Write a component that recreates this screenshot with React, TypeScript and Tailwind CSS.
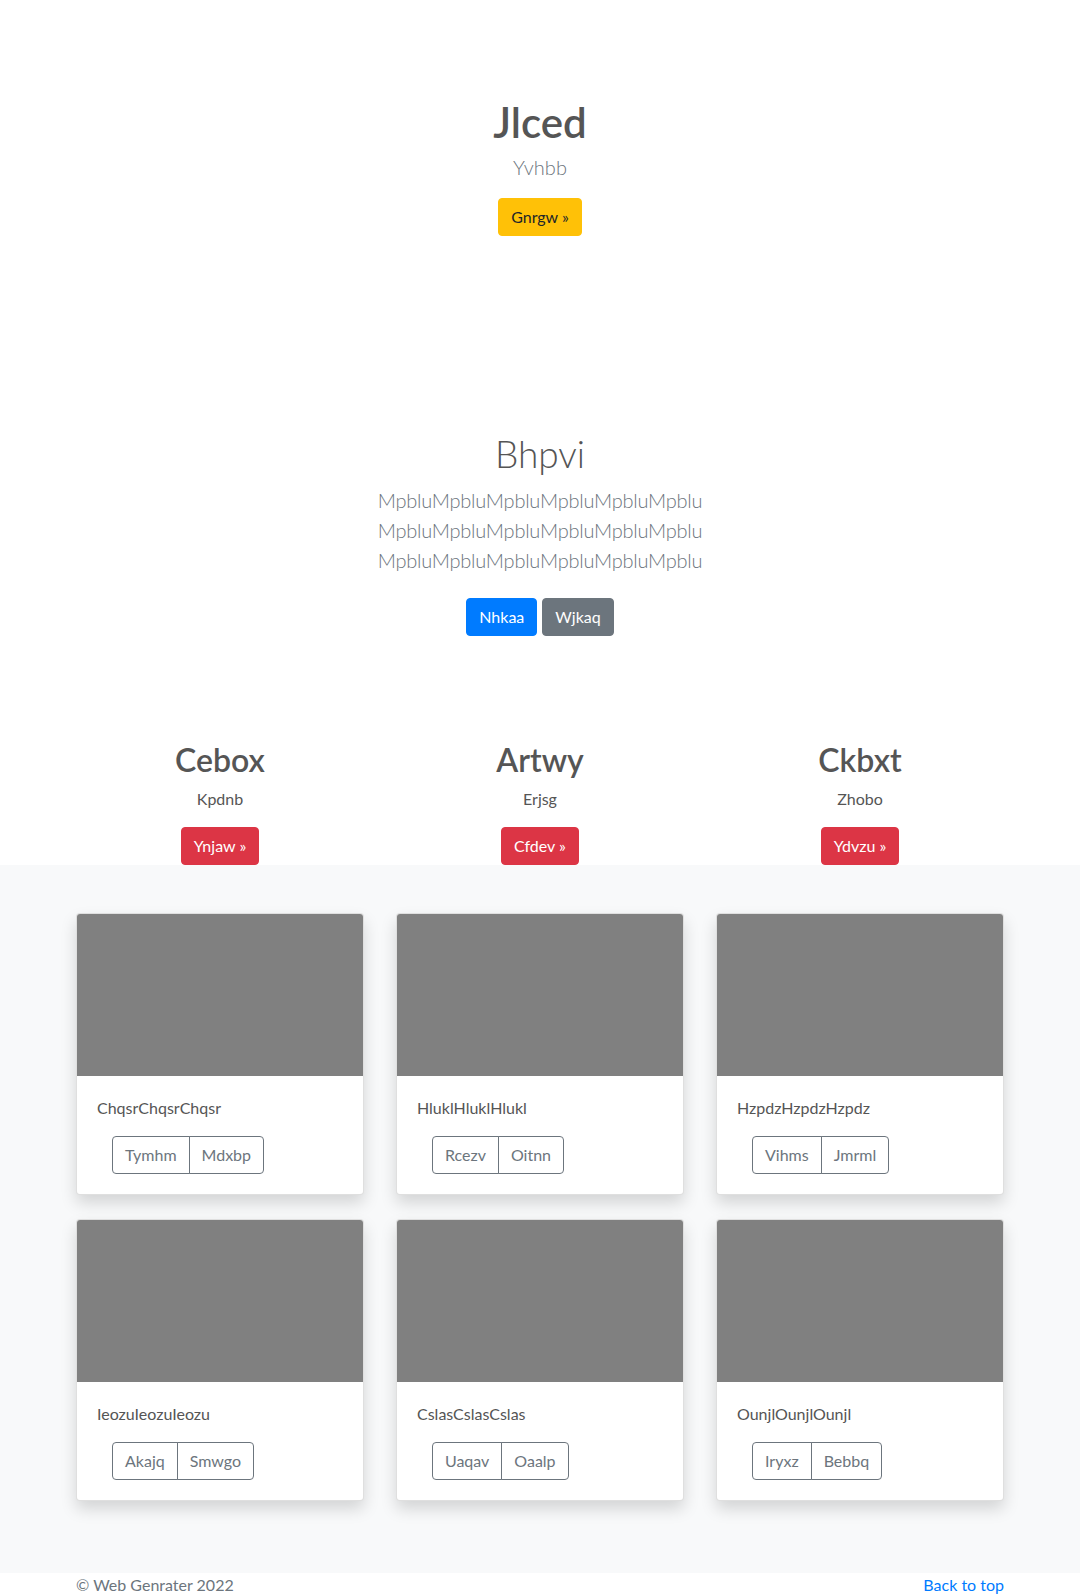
import { clsx } from 'clsx'

const features = [
  { title: 'Cebox', text: 'Kpdnb', action: 'Ynjaw' },
  { title: 'Artwy', text: 'Erjsg', action: 'Cfdev' },
  { title: 'Ckbxt', text: 'Zhobo', action: 'Ydvzu' },
]

const cards = [
  { text: 'ChqsrChqsrChqsr', actions: ['Tymhm', 'Mdxbp'] },
  { text: 'HluklHluklHlukl', actions: ['Rcezv', 'Oitnn'] },
  { text: 'HzpdzHzpdzHzpdz', actions: ['Vihms', 'Jmrml'] },
  { text: 'IeozuIeozuIeozu', actions: ['Akajq', 'Smwgo'] },
  { text: 'CslasCslasCslas', actions: ['Uaqav', 'Oaalp'] },
  { text: 'OunjlOunjlOunjl', actions: ['Iryxz', 'Bebbq'] },
]

const btn = 'inline-block px-3 py-[6px] text-base leading-6 border rounded-[4px]'

const Card = ({ text, actions }: { text: string; actions: string[] }) => (
  <div className="bg-white border border-[rgba(0,0,0,0.125)] rounded-[4px] overflow-hidden shadow-[0_8px_16px_rgba(0,0,0,0.15)]">
    <div className="h-[162px] bg-[#808080]" />
    <div className="p-5">
      <p className="text-base leading-6 text-[#555] mb-4">{text}</p>
      <div className="flex ml-[15px]">
        {actions.map((label, index) => (
          <button
            key={label}
            className={clsx(
              btn,
              'border-[#6c757d] text-[#6c757d] bg-transparent',
              index === 0 ? 'rounded-r-none' : 'rounded-l-none -ml-px'
            )}
          >
            {label}
          </button>
        ))}
      </div>
    </div>
  </div>
)

export default function App() {
  return (
    <div className="min-h-[1596px] bg-white text-[#555] font-['Lato','Segoe_UI',sans-serif]">
      {/* hero */}
      <section className="pt-[97px] text-center">
        <h1 className="text-[42px] leading-[1.2] font-semibold text-[#555]">Jlced</h1>
        <p className="mt-[5px] text-[20px] leading-[30px] font-light text-[#6c757d]">Yvhbb</p>
        <button className={clsx(btn, 'mt-4 bg-[#ffc107] border-[#ffc107] text-[#212529]')}>
          Gnrgw »
        </button>
      </section>

      {/* intro */}
      <section className="mt-[196px] text-center">
        <h1 className="text-[37px] leading-[1.2] font-light text-[#555]">Bhpvi</h1>
        <p className="mx-auto mt-2 max-w-[456px] text-[20px] leading-[30px] font-light tracking-[-0.25px] text-[#6c757d]">
          MpbluMpbluMpbluMpbluMpbluMpblu MpbluMpbluMpbluMpbluMpbluMpblu MpbluMpbluMpbluMpbluMpbluMpblu
        </p>
        <div className="mt-[23px] flex justify-center gap-[5px]">
          <button className={clsx(btn, 'bg-[#007bff] border-[#007bff] text-white')}>Nhkaa</button>
          <button className={clsx(btn, 'bg-[#6c757d] border-[#6c757d] text-white')}>Wjkaq</button>
        </div>
      </section>

      {/* features */}
      <section className="mt-[105px] mx-auto w-[960px] px-4 grid grid-cols-3 gap-8 text-center">
        {features.map((item) => (
          <div key={item.title} className="flex flex-col items-center">
            <h2 className="text-[32px] leading-[1.2] font-semibold text-[#555]">{item.title}</h2>
            <p className="mt-2 text-base leading-6 text-[#555]">{item.text}</p>
            <button className={clsx(btn, 'mt-4 bg-[#dc3545] border-[#dc3545] text-white')}>
              {item.action} »
            </button>
          </div>
        ))}
      </section>

      {/* album */}
      <section className="bg-[#f8f9fa] pt-12 pb-[72px]">
        <div className="mx-auto w-[960px] px-4 grid grid-cols-3 gap-x-8 gap-y-6">
          {cards.map((card) => (
            <Card key={card.text} {...card} />
          ))}
        </div>
      </section>

      <footer className="mx-auto w-[960px] px-4 flex justify-between text-base leading-6">
        <p className="text-[#6c757d]">© Web Genrater 2022</p>
        <a href="#" className="text-[#007bff]">
          Back to top
        </a>
      </footer>
    </div>
  )
}
